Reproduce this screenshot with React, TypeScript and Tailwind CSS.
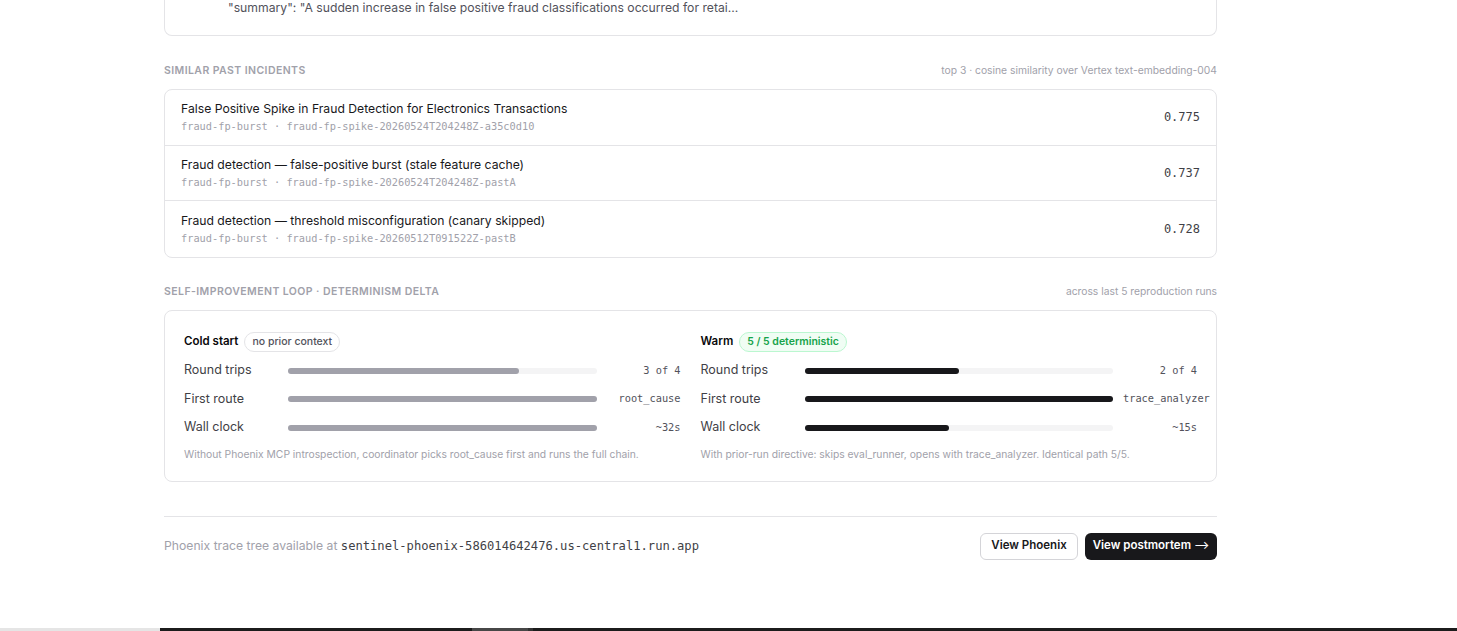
import React from "react";

const sans = { fontFamily: "Inter, 'Noto Sans', sans-serif" };
const mono = "font-['DejaVu_Sans_Mono','Liberation_Mono',monospace]";

type Incident = { title: string; meta: string; score: string };

const incidents: Incident[] = [
  {
    title: "False Positive Spike in Fraud Detection for Electronics Transactions",
    meta: "fraud-fp-burst · fraud-fp-spike-20260524T204248Z-a35c0d10",
    score: "0.775",
  },
  {
    title: "Fraud detection — false-positive burst (stale feature cache)",
    meta: "fraud-fp-burst · fraud-fp-spike-20260524T204248Z-pastA",
    score: "0.737",
  },
  {
    title: "Fraud detection — threshold misconfiguration (canary skipped)",
    meta: "fraud-fp-burst · fraud-fp-spike-20260512T091522Z-pastB",
    score: "0.728",
  },
];

type Metric = { label: string; pct: number; value: string };

const cold: Metric[] = [
  { label: "Round trips", pct: 75, value: "3 of 4" },
  { label: "First route", pct: 100, value: "root_cause" },
  { label: "Wall clock", pct: 100, value: "~32s" },
];

const warm: Metric[] = [
  { label: "Round trips", pct: 50, value: "2 of 4" },
  { label: "First route", pct: 100, value: "trace_analyzer" },
  { label: "Wall clock", pct: 47, value: "~15s" },
];

function SectionHeader({ title, note }: { title: string; note: string }) {
  return (
    <div className="flex items-center justify-between h-4">
      <span className="text-[10.5px] font-semibold uppercase tracking-[0.04em] text-[#a1a1aa]">
        {title}
      </span>
      <span className="text-[10.3px] text-[#a1a1aa]">{note}</span>
    </div>
  );
}

function MetricRow({ m, dark }: { m: Metric; dark: boolean }) {
  return (
    <div className="flex items-center h-5">
      <span className="w-[104px] shrink-0 text-[12.5px] text-[#3f3f46]">{m.label}</span>
      <div className="flex-1 h-[6px] rounded-full bg-[#f4f4f5]">
        <div
          className={`h-full rounded-full ${dark ? "bg-[#18181b]" : "bg-[#a1a1aa]"}`}
          style={{ width: `${m.pct}%` }}
        />
      </div>
      <span
        className={`ml-[10px] w-[74px] shrink-0 text-right whitespace-nowrap text-[10.3px] text-[#52525b] ${mono}`}
      >
        {m.value}
      </span>
    </div>
  );
}

function RunColumn({
  name,
  badge,
  badgeClass,
  metrics,
  dark,
  note,
}: {
  name: string;
  badge: string;
  badgeClass: string;
  metrics: Metric[];
  dark: boolean;
  note: string;
}) {
  return (
    <div className="flex flex-col min-w-0">
      <div className="flex items-center gap-[6px] h-5">
        <span className="text-[11.5px] font-semibold text-[#09090b]">{name}</span>
        <span
          className={`h-5 px-[7px] flex items-center rounded-full border text-[10.5px] font-medium ${badgeClass}`}
        >
          {badge}
        </span>
      </div>
      <div className="mt-[9px] flex flex-col gap-[8.5px]">
        {metrics.map((m) => (
          <MetricRow key={m.label} m={m} dark={dark} />
        ))}
      </div>
      <p className="mt-[9px] h-[14px] leading-[14px] text-[10.3px] text-[#a1a1aa] whitespace-nowrap">
        {note}
      </p>
    </div>
  );
}

export default function App() {
  return (
    <div className="h-[631px] overflow-hidden bg-white flex flex-col" style={sans}>
      <main className="ml-[164px] w-[1053px] flex flex-col">
        {/* tail of the raw JSON payload card */}
        <div className="rounded-b-lg border border-t-0 border-[#e4e4e7] pl-[63px] pb-[19px]">
          <div className="h-4 leading-4 text-[12.2px] text-[#52525b] whitespace-nowrap">
            "summary": "A sudden increase in false positive fraud classifications occurred for retai...
          </div>
        </div>

        <div className="mt-[27px]">
          <SectionHeader
            title="Similar past incidents"
            note="top 3 · cosine similarity over Vertex text-embedding-004"
          />
        </div>

        <div className="mt-[10px] rounded-lg border border-[#e4e4e7] divide-y divide-[#e4e4e7]">
          {incidents.map((inc) => (
            <div key={inc.score} className="h-[55.5px] flex items-center justify-between pl-4 pr-4">
              <div className="flex flex-col">
                <span className="text-[12.2px] leading-[18px] text-[#18181b]">{inc.title}</span>
                <span className={`text-[10.3px] leading-[16px] text-[#a1a1aa] ${mono}`}>{inc.meta}</span>
              </div>
              <span className={`text-[12px] text-[#3f3f46] ${mono}`}>{inc.score}</span>
            </div>
          ))}
        </div>

        <div className="mt-[26px]">
          <SectionHeader
            title="Self-improvement loop · determinism delta"
            note="across last 5 reproduction runs"
          />
        </div>

        <div className="mt-[10px] rounded-lg border border-[#e4e4e7] px-[19px] pt-[21px] pb-5 grid grid-cols-2 gap-5">
          <RunColumn
            name="Cold start"
            badge="no prior context"
            badgeClass="border-[#e4e4e7] text-[#52525b] bg-white"
            metrics={cold}
            dark={false}
            note="Without Phoenix MCP introspection, coordinator picks root_cause first and runs the full chain."
          />
          <RunColumn
            name="Warm"
            badge="5 / 5 deterministic"
            badgeClass="border-[#bbf7d0] text-[#16a34a] bg-[#f0fdf4] font-semibold"
            metrics={warm}
            dark
            note="With prior-run directive: skips eval_runner, opens with trace_analyzer. Identical path 5/5."
          />
        </div>

        <footer className="mt-[34px] border-t border-[#e4e4e7] pt-4 flex items-center justify-between">
          <span className="text-[12.2px] text-[#a1a1aa]">
            Phoenix trace tree available at{" "}
            <span className={`text-[12.15px] text-[#3f3f46] ${mono}`}>
              sentinel-phoenix-586014642476.us-central1.run.app
            </span>
          </span>
          <div className="flex items-center gap-[7px]">
            <button className="h-[27px] w-[98px] rounded-md border border-[#d4d4d8] bg-white text-[11.5px] font-semibold text-[#18181b]">
              View Phoenix
            </button>
            <button className="h-[27px] w-[132px] rounded-md bg-[#18181b] text-[11.5px] font-semibold text-white">
              View postmortem <span className="font-normal">⟶</span>
            </button>
          </div>
        </footer>
      </main>

      {/* strip of the docked panel below */}
      <div className="mt-auto h-[3px] flex shrink-0">
        <div className="w-[160px] bg-[#e5e5e5]" />
        <div className="w-[312px] bg-[#1c1c1c]" />
        <div className="w-[56px] bg-[#474747]" />
        <div className="w-[5px] bg-[#333333]" />
        <div className="flex-1 bg-[#1c1c1c]" />
      </div>
    </div>
  );
}
